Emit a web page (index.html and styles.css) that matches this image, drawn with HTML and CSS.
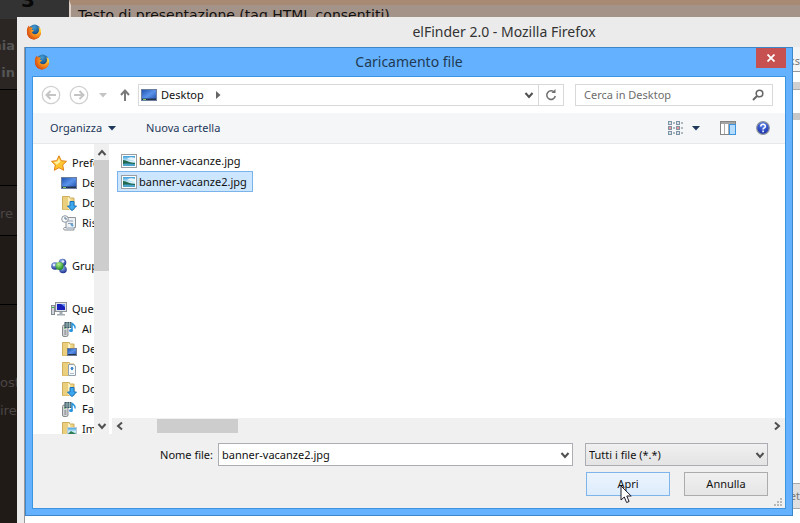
FILE: index.html
```html
<!DOCTYPE html>
<html lang="it">
<head>
<meta charset="utf-8">
<title>elFinder 2.0 - Caricamento file</title>
<link rel="stylesheet" href="styles.css">
</head>
<body>
<svg class="defs" aria-hidden="true">
  <defs>
    <linearGradient id="g-blue" x1="0" y1="0" x2="1" y2="1"><stop offset="0" stop-color="#1c4fb0"/><stop offset=".5" stop-color="#5b93ea"/><stop offset="1" stop-color="#1d4ba6"/></linearGradient>
    <linearGradient id="g-folder" x1="0" y1="0" x2="1" y2="0"><stop offset="0" stop-color="#e3bf5a"/><stop offset=".5" stop-color="#fbeaa6"/><stop offset="1" stop-color="#e6c976"/></linearGradient>
    <linearGradient id="g-sky" x1="0" y1="0" x2="0" y2="1"><stop offset="0" stop-color="#3e9fdc"/><stop offset=".55" stop-color="#d7f2fa"/><stop offset="1" stop-color="#2d8fa8"/></linearGradient>
    <radialGradient id="g-fox" cx=".7" cy=".35" r=".9"><stop offset="0" stop-color="#ffd83b"/><stop offset=".45" stop-color="#f58a1c"/><stop offset="1" stop-color="#c42b10"/></radialGradient>
    <radialGradient id="g-globe" cx=".45" cy=".25" r=".8"><stop offset="0" stop-color="#3f9fd8"/><stop offset="1" stop-color="#0d2f66"/></radialGradient>
    <radialGradient id="g-help" cx=".5" cy=".25" r=".8"><stop offset="0" stop-color="#5d86ee"/><stop offset="1" stop-color="#0e24a2"/></radialGradient>
    <radialGradient id="g-green" cx=".4" cy=".3" r=".7"><stop offset="0" stop-color="#b7f08e"/><stop offset="1" stop-color="#1c8a22"/></radialGradient>
    <radialGradient id="g-ball" cx=".4" cy=".3" r=".7"><stop offset="0" stop-color="#9cb8f2"/><stop offset="1" stop-color="#182f8c"/></radialGradient>
    <symbol id="i-fox" viewBox="0 0 16 16">
      <circle cx="8" cy="8.400" r="7" fill="url(#g-fox)"/>
      <circle cx="8.600" cy="6.200" r="5.600" fill="url(#g-globe)"/>
      <path d="M1 5.200C1.400 3.400 2.200 2.200 3 1.400c.1.900.5 1.500 1 1.900 1.300-.3 2.400 0 3 .6-.7.300-1.300.900-1.500 1.600.5.600 1.600.500 2.500.800-.1.900-1.300 1.300-2.200 2 .9 2.300 4.300 2.600 6 .8 1.500-1.600 1.500-4.200.4-6.200 2.300 1.500 3.400 4 2.700 6.700C14.100 13 11.500 15.400 8 15.400 3.500 15.400.3 11.700 1 5.200z" fill="url(#g-fox)"/>
      <path d="M12.500 3.200c1.600 2 1.700 4.500.7 6.400 1.400-.9 2-2.500 1.800-3.700-.4-1.200-1.300-2.200-2.500-2.700z" fill="#ffd942"/>
    </symbol>
    <symbol id="i-screen" viewBox="0 0 16 14">
      <rect x=".5" y="1.500" width="15" height="11" fill="url(#g-blue)" stroke="#6d7f9c"/>
      <path d="M1 10.500h14v1.500H1z" fill="#26334f"/><path d="M2 11h3v1H2z" fill="#7ecb61"/>
    </symbol>
    <symbol id="i-star" viewBox="0 0 16 16">
      <path d="M8 .8l2.300 4.900 5.200.6-3.800 3.700 1 5.300L8 12.700l-4.700 2.600 1-5.300L.5 6.300l5.200-.6z" fill="#ffc431" stroke="#e08116"/>
      <path d="M8 3.200l1.500 3.500-3.700 3.100-3-2.800 3.500-.4z" fill="#fff0a2"/>
    </symbol>
    <symbol id="i-folder" viewBox="0 0 16 16">
      <path d="M1.500 1.500h7v1.500h4.500v11.500H1.500z" fill="url(#g-folder)" stroke="#cfae5c"/>
      <path d="M2 2h5v12.500H2z" fill="#e9cf7e"/><path d="M7.500 2l1.500 1.500v11.500l-1.500-1z" fill="#fff6cf"/>
    </symbol>
    <symbol id="i-download" viewBox="0 0 16 16">
      <use href="#i-folder"/><path d="M9 6.500h4v4.500h2.500L11 15.700 6.500 11H9z" fill="#3da8ef" stroke="#1670b8"/>
    </symbol>
    <symbol id="i-recent" viewBox="0 0 16 16">
      <path d="M5 2.500h9.500v10H13v2.500H4c-2 0-2-2.500 0-2.500h1z" fill="#eef1f3" stroke="#8c9298"/>
      <path d="M7 6h5M7 8.500h5M5 13h8" stroke="#8fa0b4"/><path d="M10 9l2 2" stroke="#579ed9" stroke-width="2"/>
      <circle cx="4" cy="4" r="3.300" fill="#f8fafc" stroke="#8e989f"/><path d="M4 2v2h2" fill="none" stroke="#55708d"/>
    </symbol>
    <symbol id="i-group" viewBox="0 0 16 16">
      <circle cx="11.500" cy="4.500" r="3.800" fill="url(#g-ball)"/><circle cx="4" cy="8" r="3.800" fill="url(#g-ball)"/>
      <circle cx="12" cy="11.500" r="3.800" fill="url(#g-ball)"/><circle cx="8.500" cy="8" r="4" fill="url(#g-green)"/>
      <circle cx="3" cy="7" r="1.200" fill="#dfe8ff"/><circle cx="12" cy="3.500" r="1.200" fill="#dfe8ff"/>
    </symbol>
    <symbol id="i-pc" viewBox="0 0 16 16">
      <rect x=".5" y="4.500" width="3" height="9" fill="#d2d6da" stroke="#848b91"/><path d="M1 6.500h2" stroke="#39b54a"/>
      <rect x="4.500" y="1.500" width="11" height="9" fill="#dfe3e7" stroke="#8b9299"/><rect x="6" y="3" width="8" height="6" fill="#1720b8"/>
      <path d="M10 3h4v3z" fill="#6b92f0"/><path d="M8.500 11h3v2H14v1.500H6V13h2.500z" fill="#a2a9b0"/>
    </symbol>
    <symbol id="i-media" viewBox="0 0 16 16">
      <rect x="1.500" y="4" width="5.500" height="11.500" rx="1.500" fill="#d3d5d6" stroke="#85898c"/><path d="M3 7h2" stroke="#42af43"/><path d="M4.300 9v5" stroke="#a0a3a5" stroke-width="2"/>
      <rect x="3.500" y="1" width="7" height="6" fill="#38525f"/><path d="M4 3h6M4 5h6M6 1v6M8.500 1v6" stroke="#b2cfd0" stroke-width=".7"/>
      <path d="M11 9V2c1 2 4 2 3 5.500" fill="none" stroke="#2592dd" stroke-width="1.500"/><ellipse cx="10" cy="9.500" rx="2" ry="1.500" fill="#2592dd"/>
    </symbol>
    <symbol id="i-desk" viewBox="0 0 16 16">
      <use href="#i-folder"/><rect x="6.500" y="7.500" width="9" height="7" fill="url(#g-blue)" stroke="#6c7c94"/><path d="M7 13h8v1H7z" fill="#26334f"/>
    </symbol>
    <symbol id="i-docs" viewBox="0 0 16 16">
      <use href="#i-folder"/><path d="M7.500 3.500h5l2 1.500v9.500h-7z" fill="#f5f9fc" stroke="#90a0ac"/><path d="M9 7.500h4M9 12.500h4" stroke="#b2bec8"/><path d="M10 6h2v3h-2z" fill="#3b89d2"/>
    </symbol>
    <symbol id="i-images" viewBox="0 0 16 16">
      <use href="#i-folder"/><rect x="6.500" y="6.500" width="9" height="8" fill="url(#g-sky)" stroke="#b9cad4"/><path d="M7 13l3-3 5 3v1H7z" fill="#2d7c54"/>
    </symbol>
    <symbol id="i-jpg" viewBox="0 0 16 14">
      <rect x=".5" y=".5" width="15" height="13" fill="#fff" stroke="#9a9da1"/><rect x="2" y="2" width="12" height="10" fill="url(#g-sky)"/>
      <path d="M6 5c2-2 5-2 8-1v3z" fill="#fff" opacity=".8"/><path d="M2 6c4 0 6 3 12 3v2H2z" fill="#23684e"/><path d="M2 10c4-1 8 0 12 0v2H2z" fill="#4ba3cc"/>
    </symbol>
    <symbol id="i-down" viewBox="0 0 10 8"><path d="M1.500 2L5 6l3.500-4" fill="none" stroke="currentColor" stroke-width="2"/></symbol>
    <symbol id="i-tri" viewBox="0 0 8 5"><path d="M0 0h8L4 4.500z" fill="currentColor"/></symbol>
  </defs>
</svg>

<div class="page">
  <div class="page-side">
    <div class="side-head">3</div>
    <div class="side-box side-menu"><span>nia</span><span>in</span></div>
    <div class="side-box side-gap"></div>
    <div class="side-box side-row">re</div>
    <div class="side-box side-space"></div>
    <div class="side-end"><span>ost</span><span>ire</span></div>
  </div>
  <div class="page-main"><p>Testo di presentazione (tag HTML consentiti)</p></div>
</div>

<section class="browser" aria-label="elFinder 2.0">
  <header class="browser-title"><svg class="ico16"><use href="#i-fox"/></svg><h1>elFinder 2.0 - Mozilla Firefox</h1></header>
  <div class="browser-view">
    <div class="view-address">ks</div>
    <div class="view-bar"></div>
    <div class="view-line"></div>
    <div class="view-foot">et</div>
  </div>
</section>

<section class="dialog" role="dialog" aria-labelledby="dialog-title">
  <header class="dialog-title">
    <svg class="ico16"><use href="#i-fox"/></svg>
    <h2 id="dialog-title">Caricamento file</h2>
    <button class="close" aria-label="Chiudi"><svg viewBox="0 0 8 8"><path d="M.5.5l7 7M7.500.5l-7 7" stroke="#fff" stroke-width="1.800"/></svg></button>
  </header>
  <div class="client">
    <nav class="nav">
      <button class="plain" aria-label="Indietro"><svg class="ico20" viewBox="0 0 20 20"><circle cx="10" cy="10" r="8.700" fill="none" stroke="#cfcfcf" stroke-width="1.300"/><path d="M15 10H6M9.500 6L5.500 10l4 4" fill="none" stroke="#c4c4c4" stroke-width="2"/></svg></button>
      <button class="plain" aria-label="Avanti"><svg class="ico20" viewBox="0 0 20 20"><circle cx="10" cy="10" r="8.700" fill="none" stroke="#cfcfcf" stroke-width="1.300"/><path d="M5 10h9M10.500 6l4 4-4 4" fill="none" stroke="#c4c4c4" stroke-width="2"/></svg></button>
      <button class="plain recent" aria-label="Percorsi recenti"><svg class="tri"><use href="#i-tri"/></svg></button>
      <button class="plain up" aria-label="Su"><svg viewBox="0 0 12 12"><path d="M6 12V2M2 6l4-4.500L10 6" fill="none" stroke="#7a7a7a" stroke-width="2"/></svg></button>
      <div class="address">
        <svg class="screen"><use href="#i-screen"/></svg><span>Desktop</span>
        <svg class="crumb" viewBox="0 0 5 8"><path d="M0 0l4.500 4L0 8z" fill="#666"/></svg>
        <button class="plain history" aria-label="Cronologia"><svg class="chev"><use href="#i-down"/></svg></button>
        <button class="refresh" aria-label="Aggiorna"><svg viewBox="0 0 12 12"><path d="M9.500 3.500A4.300 4.300 0 1 0 10.300 7" fill="none" stroke="#6e6e6e" stroke-width="1.500"/><path d="M6.500 4H10.500V0z" fill="#6e6e6e"/></svg></button>
      </div>
      <label class="search"><input type="text" placeholder="Cerca in Desktop" aria-label="Cerca in Desktop"><svg viewBox="0 0 12 12"><circle cx="7.500" cy="4.500" r="3.300" fill="none" stroke="#666" stroke-width="1.600"/><path d="M5 7L1 11" stroke="#666" stroke-width="2"/></svg></label>
    </nav>

    <div class="tools">
      <button class="plain organize">Organizza <svg class="tri"><use href="#i-tri"/></svg></button>
      <button class="plain">Nuova cartella</button>
      <div class="tools-right">
        <button class="plain view" aria-label="Cambia visualizzazione">
          <svg class="list-ico" viewBox="0 0 16 14"><g fill="#fff" stroke="#8292a3"><rect x="1.500" y=".5" width="3" height="3"/><rect x="1.500" y="5.500" width="3" height="3"/><rect x="1.500" y="10.500" width="3" height="3"/><rect x="9.500" y=".5" width="3" height="3"/><rect x="9.500" y="5.500" width="3" height="3"/><rect x="9.500" y="10.500" width="3" height="3"/></g><path d="M6 2h2M6 7h2M6 12h2M14 2h2M14 7h2M14 12h2" stroke="#68788a"/><path d="M2.500 7h1M10.500 7h1" stroke="#ce3427" stroke-width="2"/><path d="M2.500 2h1M10.500 2h1M2.500 12h1M10.500 12h1" stroke="#4a87bb"/></svg>
          <svg class="tri"><use href="#i-tri"/></svg>
        </button>
        <button class="plain" aria-label="Riquadro di anteprima"><svg class="ico16" viewBox="0 0 16 16"><rect x=".5" y="1.500" width="15" height="13" fill="#fff" stroke="#858585"/><path d="M1 3h14" stroke="#a5a5a5" stroke-width="2"/><path d="M4.500 4v10M8.500 4v10" stroke="#aaa"/><rect x="9.500" y="4.500" width="6" height="10" fill="#b6dcff" stroke="#3b94df"/></svg></button>
        <button class="plain" aria-label="Guida"><svg class="help" viewBox="0 0 14 14"><circle cx="7" cy="7" r="6.300" fill="url(#g-help)" stroke="#8d949d" stroke-width="1.200"/><path d="M4.800 5.500c0-3 4.600-2.800 4.600-.3C9.400 7 7.100 6.700 7.100 8.600" fill="none" stroke="#fff" stroke-width="1.600"/><path d="M6.300 9.600h1.600v1.600H6.300z" fill="#fff"/></svg></button>
      </div>
    </div>

    <div class="content">
      <div class="tree">
        <ul>
          <li><svg class="ico16"><use href="#i-star"/></svg>Preferiti</li>
          <li class="sub"><svg class="ico16"><use href="#i-screen"/></svg>Desktop</li>
          <li class="sub"><svg class="ico16"><use href="#i-download"/></svg>Download</li>
          <li class="sub"><svg class="ico16"><use href="#i-recent"/></svg>Risorse recenti</li>
        </ul>
        <ul><li><svg class="ico16"><use href="#i-group"/></svg>Gruppo home</li></ul>
        <ul>
          <li><svg class="ico16"><use href="#i-pc"/></svg>Questo PC</li>
          <li class="sub"><svg class="ico16"><use href="#i-media"/></svg>Al</li>
          <li class="sub"><svg class="ico16"><use href="#i-desk"/></svg>Desktop</li>
          <li class="sub"><svg class="ico16"><use href="#i-docs"/></svg>Documenti</li>
          <li class="sub"><svg class="ico16"><use href="#i-download"/></svg>Download</li>
          <li class="sub"><svg class="ico16"><use href="#i-media"/></svg>Fa</li>
          <li class="sub"><svg class="ico16"><use href="#i-images"/></svg>Immagini</li>
        </ul>
      </div>
      <div class="vscroll"><svg class="chev flip"><use href="#i-down"/></svg><div class="vthumb"></div><svg class="chev"><use href="#i-down"/></svg></div>
      <div class="files">
        <ul>
          <li><svg class="jpg"><use href="#i-jpg"/></svg>banner-vacanze.jpg</li>
          <li class="selected"><svg class="jpg"><use href="#i-jpg"/></svg>banner-vacanze2.jpg</li>
        </ul>
        <div class="hscroll"><svg class="chev left"><use href="#i-down"/></svg><div class="hthumb"></div><svg class="chev right"><use href="#i-down"/></svg></div>
      </div>
    </div>

    <form class="footer">
      <label for="file-name">Nome file:</label>
      <div class="combo"><input id="file-name" type="text" value="banner-vacanze2.jpg"><svg class="chev"><use href="#i-down"/></svg></div>
      <div class="filter"><select aria-label="Tipo di file"><option>Tutti i file (*.*)</option></select><svg class="chev"><use href="#i-down"/></svg></div>
      <div class="actions">
        <button type="button" class="btn primary">Apri
          <svg class="cursor" viewBox="0 0 12 19"><path d="M1 1v14l3.300-3 2.300 5.500 2.500-1L6.800 11h4.400z" fill="#fff" stroke="#1d1d2b"/></svg>
        </button>
        <button type="button" class="btn">Annulla</button>
      </div>
      <svg class="grip" viewBox="0 0 9 9"><path d="M6 0h2v2H6zM3 3h2v2H3zM6 3h2v2H6zM0 6h2v2H0zM3 6h2v2H3zM6 6h2v2H6z" fill="#b9b9b9"/></svg>
    </form>
  </div>
</section>
</body>
</html>
```
FILE: styles.css
```css
* { box-sizing: border-box; }
body {
  margin: 0;
  height: 100vh;
  overflow: hidden;
  position: relative;
  background: #211b18;
  color: #111;
  font: 11px/16px "Noto Sans", "Open Sans", sans-serif;
}
h1, h2, p, ul { margin: 0; padding: 0; font-weight: 400; }
ul { list-style: none; }
svg { display: block; flex: none; }
button, input, select { font: inherit; color: inherit; margin: 0; }
.defs { position: absolute; width: 0; height: 0; }
.plain { border: 0; padding: 0; background: none; display: flex; align-items: center; }
.ico16 { width: 16px; height: 16px; }
.ico20 { width: 20px; height: 20px; }
.chev { width: 10px; height: 8px; color: #505050; }
.tri { width: 8px; height: 5px; }

/* page behind the windows */
.page { display: flex; height: 100%; }
.page-side { flex: 0 0 69px; color: #4a4644; font-family: "DejaVu Sans", sans-serif; font-size: 13px; }
.side-head { height: 19px; background: #333; color: #080808; font-size: 20px; font-weight: 700; line-height: 1px; padding-left: 21px; overflow: hidden; }
.side-box { border-bottom: 1px solid #000; }
.side-menu { height: 71px; padding-top: 13px; background: #2b2624; color: #555; font-weight: 700; display: flex; flex-direction: column; line-height: 27px; }
.side-menu span { width: 15px; direction: rtl; }
.side-gap { height: 96px; }
.side-row { height: 50px; line-height: 56px; background: #25201e; }
.side-space { height: 69px; }
.side-end { padding-top: 64px; display: flex; flex-direction: column; line-height: 28px; }
.page-main { flex: 1; border-left: 2px solid #ddd0c6; border-top: 5px solid #a88a74; background: #a39389; color: #111; }
.page-main p { padding-left: 7px; font: 14px/20px "DejaVu Sans", sans-serif; }

/* browser window */
.browser {
  position: absolute;
  inset: 17px 0 0 17px;
  display: flex;
  flex-direction: column;
  padding-left: 7px;
  background: #ebebeb;
}
.browser-title { display: flex; align-items: center; height: 30px; padding-left: 2px; }
.browser-title h1 { flex: 1; text-align: center; font: 14px/20px "Noto Sans", sans-serif; color: #333; padding-left: 166px; }
.browser-view { flex: 1; display: flex; flex-direction: column; background: #fff; border-left: 1px solid #999; color: #777; text-align: right; }
.view-address { height: 25px; border-bottom: 1px solid #999; background: #f4f4f4; line-height: 28px; }
.view-bar { height: 17px; border-bottom: 7px solid #d0d0d0; }
.view-line { height: 31px; border-top: 1px solid #aaa; border-bottom: 7px solid #c8c8c8; }
.view-foot { margin-top: auto; margin-bottom: 14px; height: 26px; background: #e0e0e0; border: solid #aaa; border-width: 1px 0; line-height: 24px; }

/* dialog */
.dialog {
  position: absolute;
  inset: 47px 7px 7px 25px;
  display: flex;
  flex-direction: column;
  padding: 0 6px 6px;
  border: 1px solid #3d86ca;
  background: #64b2ff;
}
.dialog-title { display: flex; align-items: center; height: 28px; padding-left: 2px; }
.dialog-title h2 { flex: 1; text-align: center; font: 14px/20px "Noto Sans", sans-serif; color: #213a52; padding-left: 12px; }
.close { align-self: flex-start; width: 30px; height: 20px; border: 0; padding: 0; background: #c75050; display: grid; place-items: center; }
.close svg { width: 8px; height: 8px; }
.client { flex: 1; min-height: 0; display: flex; flex-direction: column; border: 1px solid #3d94e0; background: #fff; }

.nav { display: flex; align-items: center; height: 36px; padding: 0 12px 0 8px; }
.nav .plain + .plain { margin-left: 8px; }
.recent { color: #c4c4c4; }
.nav .plain.recent { margin-left: 10px; }
.nav .plain.up { margin-left: 12px; }
.up svg { width: 12px; height: 12px; }
.address { flex: 1; margin-left: 7px; display: flex; align-items: center; height: 22px; border: 1px solid #d9d9d9; padding-left: 2px; }
.screen { width: 16px; height: 14px; margin-right: 4px; }
.crumb { width: 5px; height: 8px; margin-left: 12px; }
.history { margin-left: auto; }
.refresh { align-self: stretch; width: 25px; margin-left: 4px; padding: 0; border: 0; border-left: 1px solid #d9d9d9; background: none; display: grid; place-items: center; }
.refresh svg { width: 12px; height: 12px; }
.search { flex: 0 0 198px; min-width: 0; margin-left: 11px; display: flex; align-items: center; height: 22px; border: 1px solid #d9d9d9; padding: 0 8px; }
.search input { flex: 1; min-width: 0; border: 0; outline: 0; padding: 0; background: none; }
.search input::placeholder { color: #6d6d6d; opacity: 1; }
.search svg { width: 12px; height: 12px; }

.tools { display: flex; align-items: center; gap: 30px; height: 31px; padding: 0 15px 0 17px; border-bottom: 1px solid #e8e8ea; background: #f5f6f7; color: #1e395b; }
.organize { gap: 6px; }
.tools-right { margin-left: auto; display: flex; align-items: center; gap: 20px; }
.view { gap: 9px; }
.list-ico { width: 16px; height: 14px; }
.help { width: 14px; height: 14px; }

.content { flex: 1; min-height: 0; display: flex; overflow: hidden; }
.tree { flex: 0 0 61px; overflow: hidden; padding: 9px 0 0 18px; white-space: nowrap; }
.tree ul + ul { margin-top: 23px; }
.tree li { display: flex; align-items: center; gap: 5px; height: 20px; }
.tree .sub { padding-left: 10px; }
.vscroll { flex: 0 0 15px; display: flex; flex-direction: column; align-items: center; background: #f0f0f0; padding: 5px 0 4px; }
.vthumb { width: 100%; height: 111px; margin: 3px 0 auto; background: #cdcdcd; }
.flip { transform: rotate(180deg); }
.files { flex: 1; min-width: 0; display: flex; flex-direction: column; padding-left: 3px; }
.files ul { padding: 6px 0 0 5px; display: flex; flex-direction: column; align-items: flex-start; }
.files li { display: flex; align-items: center; gap: 2px; height: 21px; padding: 0 5px 0 3px; border: 1px solid transparent; }
.files .selected { border-color: #7bb3ea; background: #cde6ff; }
.jpg { width: 16px; height: 14px; }
.hscroll { margin-top: auto; display: flex; align-items: center; height: 16px; padding: 0 3px; background: #f0f0f0; }
.hthumb { width: 81px; height: 14px; margin: 0 auto 0 32px; background: #cdcdcd; }
.left { transform: rotate(90deg); }
.right { transform: rotate(-90deg); }

.footer {
  position: relative;
  display: grid;
  grid-template-columns: 180px 1fr 183px;
  grid-template-rows: 23px 24px;
  row-gap: 6px;
  padding: 9px 17px 12px 0;
  background: #f0f0f0;
}
.footer label { align-self: center; justify-self: end; }
.combo, .filter { position: relative; }
.combo { margin: 0 12px 0 5px; }
.combo input, .filter select { width: 100%; height: 100%; border: 1px solid #abadb3; border-radius: 0; padding: 0 3px; background: #fff; }
.filter select { appearance: none; background: linear-gradient(#f0f0f0, #e4e4e4); }
.combo .chev, .filter .chev { position: absolute; right: 3px; top: 8px; pointer-events: none; }
.actions { grid-column: 1 / -1; display: flex; justify-content: flex-end; gap: 14px; }
.btn { position: relative; width: 84px; padding: 0; border: 1px solid #acacac; background: linear-gradient(#f0f0f0, #e5e5e5); }
.primary { border-color: #7eb4ea; background: linear-gradient(#ecf4fc, #dcecfc); }
.cursor { position: absolute; left: 33px; top: 12px; width: 12px; height: 19px; }
.grip { position: absolute; right: 2px; bottom: 1px; width: 9px; height: 9px; }
```
